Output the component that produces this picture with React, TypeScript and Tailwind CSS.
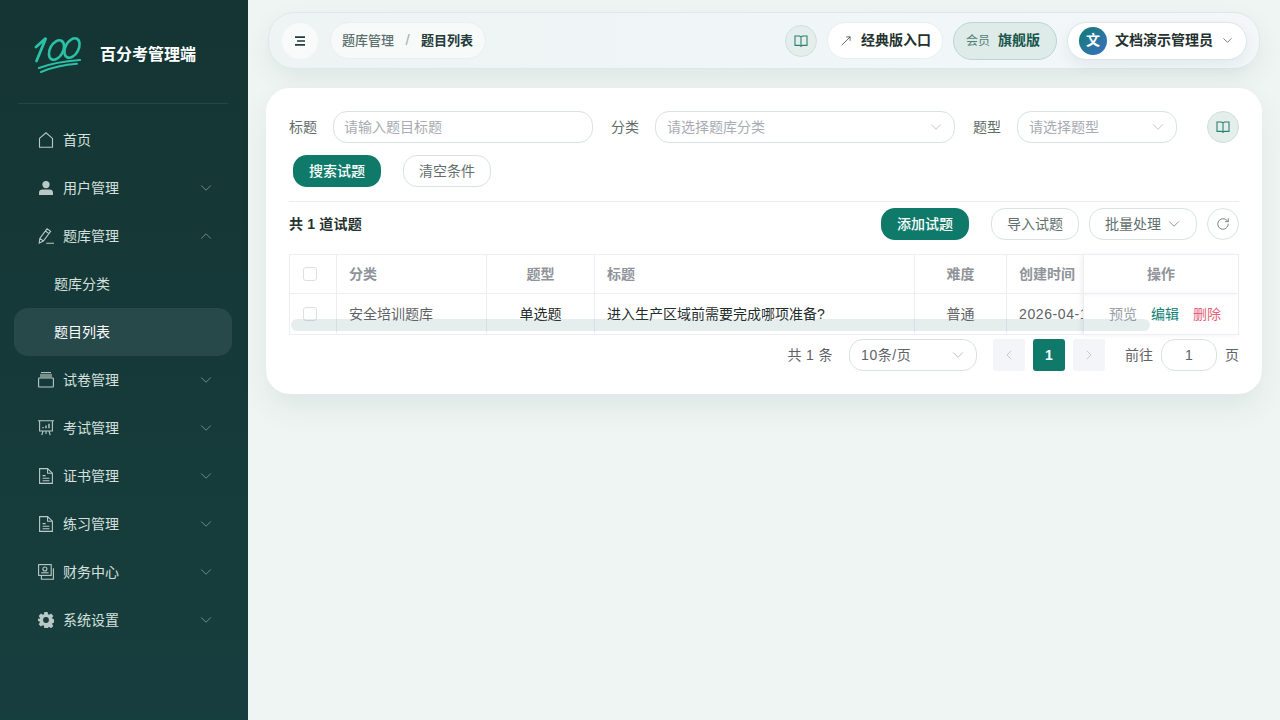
import { ChevronDown, ChevronLeft, ChevronRight, ChevronUp, MoveUpRight, RotateCw } from "lucide-react";
import type { ReactNode } from "react";

const font = "font-['Liberation_Sans','Noto_Sans_CJK_SC',sans-serif]";

function HomeIcon() {
  return (
    <svg viewBox="0 0 16 16" className="h-4 w-4" fill="none" stroke="currentColor" strokeWidth="1.1">
      <path d="M1.500 6.400 8 .8l6.500 5.600v8.800h-13z" />
    </svg>
  );
}

function UserIcon() {
  return (
    <svg viewBox="0 0 16 16" className="h-4 w-4" fill="currentColor">
      <circle cx="8" cy="4.600" r="3.600" />
      <path d="M1 12.600C1 10.400 2.600 9.400 4.400 9.400h7.200c1.800 0 3.400 1 3.400 3.200V15H1z" />
    </svg>
  );
}

function PenIcon() {
  return (
    <svg viewBox="0 0 16 16" className="h-4 w-4" fill="none" stroke="currentColor" strokeWidth="1.100">
      <path d="M1.200 15 1.800 10.400 9 .8l3.600 2.600L5.400 13zM7.400 3l3.600 2.600M1.800 10.400l3.600 2.600M8.200 15.300H16" />
    </svg>
  );
}

function PaperIcon() {
  return (
    <svg viewBox="0 0 16 16" className="h-4 w-4" fill="none" stroke="currentColor" strokeWidth="1.100">
      <path d="M3 .6h10" />
      <path d="M2 2h12v3.500H2z" fill="currentColor" fillOpacity="0.6" stroke="none" />
      <rect x="0.600" y="6" width="14.800" height="9" rx="0.600" />
    </svg>
  );
}

function BoardIcon() {
  return (
    <svg viewBox="0 0 16 16" className="h-4 w-4" fill="none" stroke="currentColor" strokeWidth="1.100">
      <path d="M0 .8h16M1.600 .8v10.200h12.800V.8M5 11l-1.200 4.200M11 11l1.200 4.200M8 11v3" />
      <path d="M5 8.200V7M8 8.200V5.600M11 8.200V3.800" strokeWidth="1.400" />
    </svg>
  );
}

function DocIcon() {
  return (
    <svg viewBox="0 0 16 16" className="h-4 w-4" fill="none" stroke="currentColor" strokeWidth="1.100">
      <path d="M1.600 .6h8l4.800 4.600v10.200H1.600zM9.600 .6v4.600h4.800M4.600 7.600h3M4.600 10.200h6.800M4.600 12.800h6.800" />
    </svg>
  );
}

function WalletIcon() {
  return (
    <svg viewBox="0 0 16 16" className="h-4 w-4" fill="none" stroke="currentColor" strokeWidth="1.100">
      <rect x="0.600" y="0.600" width="12.600" height="10.800" />
      <path d="M15.400 4.200v11H3.400v-3.800" />
      <circle cx="6.900" cy="5" r="2" />
      <path d="M3.200 8.800h7.400" />
    </svg>
  );
}

function GearIcon() {
  return (
    <svg viewBox="0 0 16 16" className="h-4 w-4" fill="currentColor">
      <path
        fillRule="evenodd"
        d="M6.400 0h3.200l.4 2.200 1.200.6L13.100 1.500l2.200 2.400-1.200 1.800.5 1.200 2.100.4v3.200l-2.100.4-.5 1.200 1.200 1.800-2.200 2.300-1.900-1.200-1.200.5-.4 2.200H6.400L6 13.800l-1.200-.5-1.900 1.200L.7 12.200l1.200-1.800-.5-1.200L-.7 8.800V5.600L1.400 7.200l.5-1.500L.7 3.900l2.200-2.400 1.900 1.300L6 2.200zM8 5.100a2.900 2.900 0 1 0 0 5.800 2.900 2.900 0 0 0 0-5.800z"
      />
    </svg>
  );
}

function BookIcon() {
  return (
    <svg viewBox="0 0 14 14" className="h-3.5 w-3.5" fill="none" stroke="currentColor" strokeWidth="1.100">
      <path d="M1 2h4.600L7 3l1.400-1H13v9.400H8.400L7 12.400l-1.400-1H1zM7 3v9.400" />
    </svg>
  );
}

function Logo() {
  return (
    <svg viewBox="0 0 52 42" className="h-[42px] w-[52px]" fill="none" stroke="#2cc0a5" strokeLinecap="round">
      <path d="M4 13 14 4 4.500 27" strokeWidth="2.800" />
      <ellipse cx="24.500" cy="16" rx="6.500" ry="10.500" transform="rotate(28 24.500 16)" strokeWidth="2.600" />
      <ellipse cx="40" cy="14" rx="6.500" ry="10.500" transform="rotate(28 40 14)" strokeWidth="2.600" />
      <path d="M7 34C20 29 34 27 48 26" strokeWidth="2.200" />
      <path d="M9 38C21 33 34 30.500 45 29.800" strokeWidth="2" />
    </svg>
  );
}

type MenuItem = { label: string; icon: ReactNode; arrow?: "down" | "up" };

const menuTop: MenuItem[] = [
  { label: "首页", icon: <HomeIcon /> },
  { label: "用户管理", icon: <UserIcon />, arrow: "down" },
  { label: "题库管理", icon: <PenIcon />, arrow: "up" },
];

const menuBottom: MenuItem[] = [
  { label: "试卷管理", icon: <PaperIcon />, arrow: "down" },
  { label: "考试管理", icon: <BoardIcon />, arrow: "down" },
  { label: "证书管理", icon: <DocIcon />, arrow: "down" },
  { label: "练习管理", icon: <DocIcon />, arrow: "down" },
  { label: "财务中心", icon: <WalletIcon />, arrow: "down" },
  { label: "系统设置", icon: <GearIcon />, arrow: "down" },
];

function MenuRow({ item }: { item: MenuItem }) {
  return (
    <div className="flex h-12 items-center pl-[24px] pr-[17px] text-[14px] text-[#d5e0de]">
      <span className="flex w-[25px] text-[#b9c9c7]">{item.icon}</span>
      <span className="flex-1">{item.label}</span>
      {item.arrow === "down" && <ChevronDown className="h-[18px] w-[18px] text-[#8fa5a3]" strokeWidth={1} />}
      {item.arrow === "up" && <ChevronUp className="h-[18px] w-[18px] text-[#8fa5a3]" strokeWidth={1} />}
    </div>
  );
}

function Sidebar() {
  return (
    <aside className="flex h-full w-[248px] shrink-0 flex-col bg-gradient-to-b from-[#143534] to-[#173e3e]">
      <div className="ml-[18px] mr-5 flex h-[104px] items-center gap-4 border-b border-[#21474a] pl-[14px] pt-[6px]">
        <Logo />
        <span className="text-[16px] font-bold text-white">百分考管理端</span>
      </div>
      <nav className="pl-[14px] pr-4 pt-3">
        {menuTop.map((item) => (
          <MenuRow key={item.label} item={item} />
        ))}
        <div className="flex h-12 items-center pl-10 text-[14px] text-[#d5e0de]">题库分类</div>
        <div className="flex h-12 items-center rounded-[14px] bg-[#28494a] pl-10 text-[14px] text-white">题目列表</div>
        {menuBottom.map((item) => (
          <MenuRow key={item.label} item={item} />
        ))}
      </nav>
    </aside>
  );
}

function RoundBook({ className }: { className: string }) {
  return (
    <button className={`flex h-8 w-8 items-center justify-center rounded-full border border-[#cfe0dc] bg-[#e4efec] text-[#2d7f73] ${className}`}>
      <BookIcon />
    </button>
  );
}

function Header() {
  return (
    <header className="mx-5 flex h-[57px] items-center rounded-[26px] border border-[#dfe8e6] bg-gradient-to-r from-[#edf4f3] to-[#f3f7fa] pl-[13px] pr-[12px] shadow-[0_10px_24px_rgba(20,53,52,0.07)]">
      <button className="flex h-9 w-9 items-center justify-center rounded-full bg-[#f8fbfa] text-[#233b39]">
        <svg viewBox="0 0 12 10" className="h-2.5 w-3" fill="none" stroke="currentColor" strokeWidth="1.700">
          <path d="M1 1.200h10M3 5h8M1 8.800h10" />
        </svg>
      </button>
      <div className="ml-3 flex h-[37px] items-center rounded-full border border-[#e8efee] bg-[#f6faf9] pl-[11px] pr-3 text-[13px]">
        <span className="font-medium text-[#5c6f6d]">题库管理</span>
        <span className="w-[27px] text-center text-[15px] text-[#a3adac]">/</span>
        <span className="font-bold text-[#24393a]">题目列表</span>
      </div>
      <div className="flex-1" />
      <RoundBook className="" />
      <button className="ml-[10px] flex h-[37px] items-center rounded-full border border-[#e8efee] bg-white pl-[11px] pr-[11px] text-[14px] font-bold text-[#24312f]">
        <MoveUpRight className="mr-2 h-[14px] w-[14px]" strokeWidth={1.2} />
        经典版入口
      </button>
      <div className="ml-[10px] flex h-[38px] items-center rounded-full border border-[#b9d6cf] bg-[#dfebe9] pl-3 pr-4">
        <span className="text-[12px] text-[#4f8277]">会员</span>
        <span className="ml-2 text-[14px] font-bold text-[#17564b]">旗舰版</span>
      </div>
      <div className="ml-[10px] flex h-[38px] items-center rounded-full border border-[#dce8e5] bg-white pl-[11px] pr-[11px] shadow-[0_6px_14px_rgba(40,70,90,0.07)]">
        <span className="flex h-7 w-7 items-center justify-center rounded-full bg-gradient-to-br from-[#0f7a70] to-[#3a6fc4] text-[14px] font-bold text-white">
          文
        </span>
        <span className="ml-2 text-[14px] font-bold text-[#24312f]">文档演示管理员</span>
        <ChevronDown className="ml-[7px] h-[15px] w-[15px] text-[#5d6c6a]" strokeWidth={1.3} />
      </div>
    </header>
  );
}

function FieldLabel({ children }: { children: ReactNode }) {
  return <span className="shrink-0 text-[14px] text-[#5f6b69]">{children}</span>;
}

function SelectBox({ text, width }: { text: string; width: string }) {
  return (
    <div className={`flex h-8 items-center justify-between rounded-[14px] border border-[#d8e3e1] bg-white pl-[11px] pr-[9px] text-[14px] text-[#a8abb2] ${width}`}>
      {text}
      <ChevronDown className="h-[18px] w-[18px] text-[#b4bdbc]" strokeWidth={1.1} />
    </div>
  );
}

function OutlineButton({ children, className }: { children: ReactNode; className?: string }) {
  return (
    <button className={`flex h-8 items-center justify-center rounded-[14px] border border-[#d8e3e1] bg-white text-[14px] text-[#5f6f6d] ${className ?? ""}`}>
      {children}
    </button>
  );
}

const cellLine = "border-r border-[#ebeef5]";

function QuestionTable() {
  return (
    <div className="relative mt-[14px]">
      <table className="w-full table-fixed border-collapse border border-[#ebeef5] text-[14px]">
        <colgroup>
          <col className="w-[47px]" />
          <col className="w-[150px]" />
          <col className="w-[108px]" />
          <col className="w-[320px]" />
          <col className="w-[92px]" />
          <col className="w-[77px]" />
          <col />
        </colgroup>
        <thead>
          <tr className="h-[39px] border-b border-[#ebeef5] text-[#909399]">
            <th className={cellLine}>
              <span className="ml-[13px] block h-3.5 w-3.5 rounded-[3px] border border-[#dcdfe6] bg-white" />
            </th>
            <th className={`${cellLine} pl-3 text-left font-bold`}>分类</th>
            <th className={`${cellLine} font-bold`}>题型</th>
            <th className={`${cellLine} pl-3 text-left font-bold`}>标题</th>
            <th className={`${cellLine} font-bold`}>难度</th>
            <th className={`${cellLine} pl-3 text-left font-bold`}>创建时间</th>
            <th className="border-l border-[#ebeef5] font-bold shadow-[-3px_0_5px_rgba(0,0,0,0.06)]">操作</th>
          </tr>
        </thead>
        <tbody>
          <tr className="h-[41px]">
            <td className={cellLine}>
              <span className="ml-[13px] block h-3.5 w-3.5 rounded-[3px] border border-[#dcdfe6] bg-white" />
            </td>
            <td className={`${cellLine} pl-3 text-[#606266]`}>安全培训题库</td>
            <td className={`${cellLine} text-center text-[#1f2d2c]`}>单选题</td>
            <td className={`${cellLine} pl-3 text-[#1f2d2c]`}>进入生产区域前需要完成哪项准备?</td>
            <td className={`${cellLine} text-center text-[#606266]`}>普通</td>
            <td className={`${cellLine} overflow-hidden whitespace-nowrap pl-3 tracking-[0.6px] text-[#606266]`}>2026-04-18</td>
            <td className="border-l border-[#ebeef5] pl-[25px] shadow-[-3px_0_5px_rgba(0,0,0,0.06)]">
              <span className="text-[#9a9ea6]">预览</span>
              <span className="ml-[14px] text-[#0f8073]">编辑</span>
              <span className="ml-[14px] text-[#e2627a]">删除</span>
            </td>
          </tr>
        </tbody>
      </table>
      {/* scrollbar sits over the last row */}
      <div className="absolute bottom-[4px] left-[2px] h-3 w-[859px] rounded-full bg-[#3f7d72]/[0.13]" />
    </div>
  );
}

function Pagination() {
  return (
    <div className="mt-1 flex h-8 items-center justify-end text-[14px] text-[#606266]">
      <span className="tracking-[0.4px]">共 1 条</span>
      <div className="ml-4 flex h-8 w-[128px] items-center justify-between rounded-[14px] border border-[#d8e3e1] pl-[11px] pr-[9px]">
        <span className="tracking-[0.6px]">10条/页</span>
        <ChevronDown className="h-[18px] w-[18px] text-[#a8b2b1]" strokeWidth={1.1} />
      </div>
      <span className="ml-4 flex h-8 w-8 items-center justify-center rounded-[3px] bg-[#f4f5f9] text-[#b8bcc4]">
        <ChevronLeft className="h-4 w-4" strokeWidth={1.2} />
      </span>
      <span className="ml-2 flex h-8 w-8 items-center justify-center rounded-[3px] bg-[#0f7a69] text-[14px] font-bold text-white">1</span>
      <span className="ml-2 flex h-8 w-8 items-center justify-center rounded-[3px] bg-[#f4f5f9] text-[#b8bcc4]">
        <ChevronRight className="h-4 w-4" strokeWidth={1.2} />
      </span>
      <span className="ml-5">前往</span>
      <span className="ml-2 flex h-8 w-14 items-center justify-center rounded-[14px] border border-[#d8e3e1]">1</span>
      <span className="ml-2">页</span>
    </div>
  );
}

function ListCard() {
  return (
    <section className="mx-[18px] mt-[19px] h-[306px] rounded-[24px] bg-white px-[23px] pt-[23px] shadow-[0_14px_30px_rgba(20,53,52,0.07)]">
      <div className="flex h-8 items-center">
        <FieldLabel>标题</FieldLabel>
        <div className="ml-4 flex h-8 w-[260px] items-center rounded-[14px] border border-[#d8e3e1] pl-[10px] text-[14px] text-[#a8abb2]">请输入题目标题</div>
        <div className="ml-[18px] flex">
          <FieldLabel>分类</FieldLabel>
        </div>
        <div className="ml-4">
          <SelectBox text="请选择题库分类" width="w-[300px]" />
        </div>
        <div className="ml-[18px] flex">
          <FieldLabel>题型</FieldLabel>
        </div>
        <div className="ml-4">
          <SelectBox text="请选择题型" width="w-[160px]" />
        </div>
        <RoundBook className="ml-[30px]" />
      </div>
      <div className="mt-3 flex gap-[22px] pl-1">
        <button className="flex h-8 w-[88px] items-center justify-center rounded-[14px] bg-[#0f7a69] text-[14px] font-medium text-white">搜索试题</button>
        <OutlineButton className="w-[88px]">清空条件</OutlineButton>
      </div>
      <div className="mt-[14px] flex h-[39px] items-center justify-between border-t border-[#e9eeed] pt-[6px]">
        <span className="text-[14px] font-bold tracking-[0.2px] text-[#24312f]">共 1 道试题</span>
        <div className="flex items-center">
          <button className="flex h-8 w-[88px] items-center justify-center rounded-[14px] bg-[#0f7a69] text-[14px] font-medium text-white">添加试题</button>
          <OutlineButton className="ml-[22px] w-[88px]">导入试题</OutlineButton>
          <OutlineButton className="ml-[10px] w-[108px] !justify-start gap-[4px] pl-[15px]">
            批量处理
            <ChevronDown className="h-[18px] w-[18px] text-[#7d8c8a]" strokeWidth={1.2} />
          </OutlineButton>
          <button className="ml-[10px] flex h-8 w-8 items-center justify-center rounded-full border border-[#d8e3e1] text-[#69767a]">
            <RotateCw className="h-3.5 w-3.5" strokeWidth={1.5} />
          </button>
        </div>
      </div>
      <QuestionTable />
      <Pagination />
    </section>
  );
}

export default function App() {
  return (
    <div className={`flex h-[720px] w-[1280px] overflow-hidden bg-[#eff5f3] ${font}`}>
      <Sidebar />
      <main className="min-w-0 flex-1 pt-3">
        <Header />
        <ListCard />
      </main>
    </div>
  );
}
